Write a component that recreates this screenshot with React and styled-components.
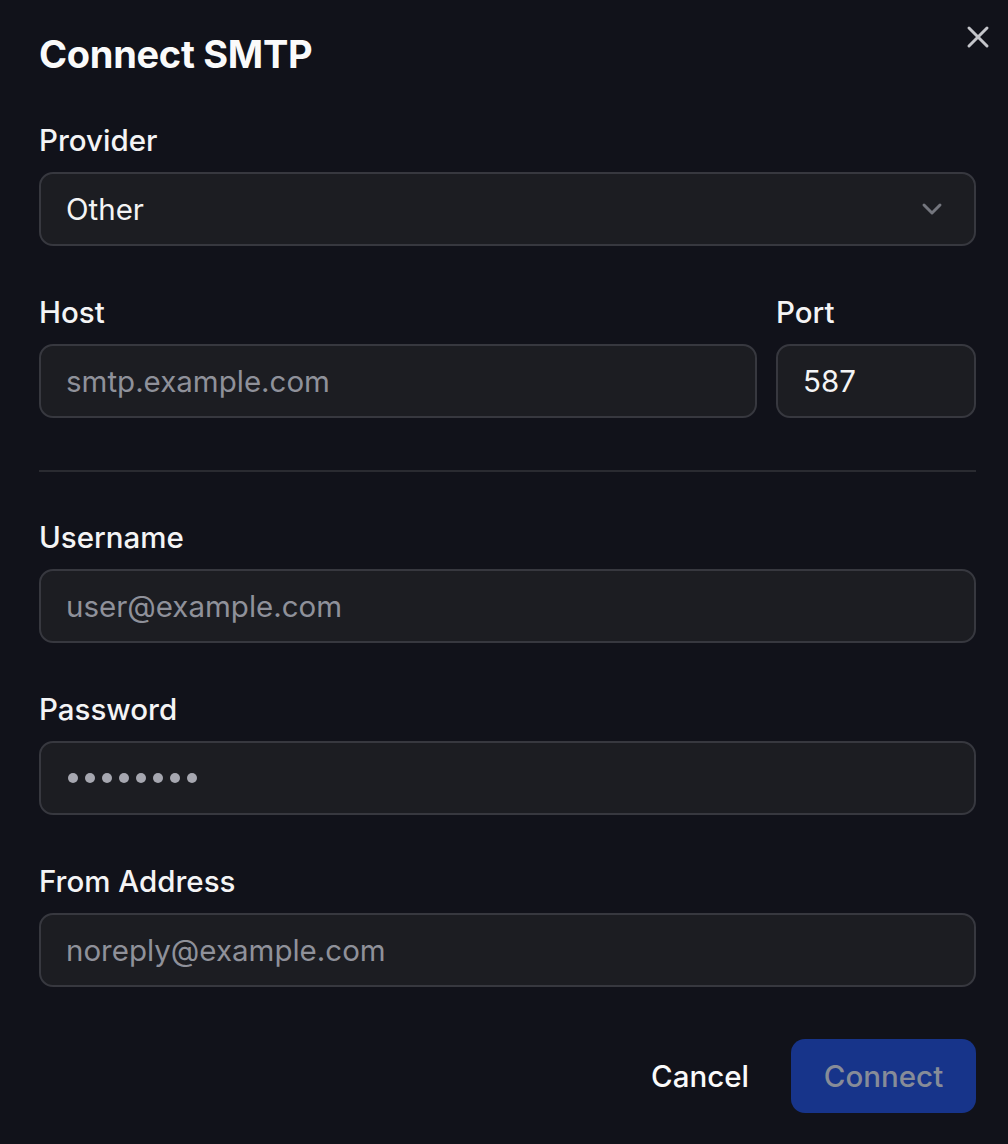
import React from 'react';
import styled, { createGlobalStyle } from 'styled-components';
import { X, ChevronDown } from 'lucide-react';

const Global = createGlobalStyle`
  html, body {
    margin: 0;
    background: #11121a;
  }
  body {
    font-family: Inter, "Noto Sans", sans-serif;
    color: #f4f4f5;
  }
`;

const Dialog = styled.div`
  position: relative;
  box-sizing: border-box;
  width: 1008px;
  min-height: 1144px;
  padding: 32px 32px 31px 39px;
  display: flex;
  flex-direction: column;
`;

const Title = styled.h2`
  margin: 0 0 46px;
  font-size: 38px;
  line-height: 44px;
  font-weight: 700;
  letter-spacing: -0.3px;
  color: #fafafa;
`;

const CloseButton = styled.button`
  position: absolute;
  top: 19px;
  right: 12px;
  width: 36px;
  height: 36px;
  padding: 0;
  border: 0;
  background: transparent;
  color: #c4c5ca;
  display: flex;
  align-items: center;
  justify-content: center;
`;

const Field = styled.div`
  display: flex;
  flex-direction: column;
  gap: 14px;
  flex: ${p => (p.$grow ? 1 : 'none')};
  width: ${p => p.$width || 'auto'};
`;

const Label = styled.label`
  font-size: 29.5px;
  line-height: 36px;
  font-weight: 550;
  color: #f4f4f5;
`;

const Box = styled.div`
  box-sizing: border-box;
  height: 74px;
  border: 2px solid #37383f;
  border-radius: 14px;
  background: #1c1d22;
  padding: 0 26px 0 25px;
  display: flex;
  align-items: center;
  justify-content: space-between;
  font-size: 29.5px;
  color: ${p => (p.$placeholder ? '#8f919a' : '#f4f4f5')};
`;

const Dots = styled.span`
  display: flex;
  gap: 7px;
  margin-left: 2px;
  span {
    width: 10px;
    height: 10px;
    border-radius: 50%;
    background: #a6a7b0;
  }
`;

const Stack = styled.div`
  display: flex;
  flex-direction: column;
  gap: 48px;
`;

const Row = styled.div`
  display: flex;
  gap: 19px;
`;

const Divider = styled.hr`
  margin: 4px 0 -1px;
  border: 0;
  border-top: 2px solid #2a2b31;
`;

const Footer = styled.div`
  margin-top: 52px;
  display: flex;
  justify-content: flex-end;
  align-items: center;
  gap: 42px;
`;

const TextButton = styled.button`
  border: 0;
  background: transparent;
  padding: 0;
  font-family: inherit;
  font-size: 29.5px;
  font-weight: 550;
  color: #fafafa;
`;

const PrimaryButton = styled.button`
  box-sizing: border-box;
  width: 185px;
  height: 74px;
  border: 0;
  border-radius: 14px;
  background: #17348a;
  font-family: inherit;
  font-size: 29.5px;
  font-weight: 550;
  color: #878c98;
`;

const Input = ({ value, placeholder }) => (
  <Box $placeholder={!value}>{value || placeholder}</Box>
);

export default function App() {
  return (
    <>
      <Global />
      <Dialog>
        <CloseButton aria-label="Close">
          <X size={36} strokeWidth={2} />
        </CloseButton>
        <Title>Connect SMTP</Title>
        <Stack>
          <Field>
            <Label>Provider</Label>
            <Box>
              Other
              <ChevronDown size={32} strokeWidth={2.2} color="#74767e" />
            </Box>
          </Field>
          <Row>
            <Field $grow>
              <Label>Host</Label>
              <Input placeholder="smtp.example.com" />
            </Field>
            <Field $width="200px">
              <Label>Port</Label>
              <Input value="587" />
            </Field>
          </Row>
          <Divider />
          <Field>
            <Label>Username</Label>
            <Input placeholder="user@example.com" />
          </Field>
          <Field>
            <Label>Password</Label>
            <Box>
              <Dots>
                {Array.from({ length: 8 }).map((_, i) => (
                  <span key={i} />
                ))}
              </Dots>
            </Box>
          </Field>
          <Field>
            <Label>From Address</Label>
            <Input placeholder="noreply@example.com" />
          </Field>
        </Stack>
        <Footer>
          <TextButton>Cancel</TextButton>
          <PrimaryButton>Connect</PrimaryButton>
        </Footer>
      </Dialog>
    </>
  );
}
